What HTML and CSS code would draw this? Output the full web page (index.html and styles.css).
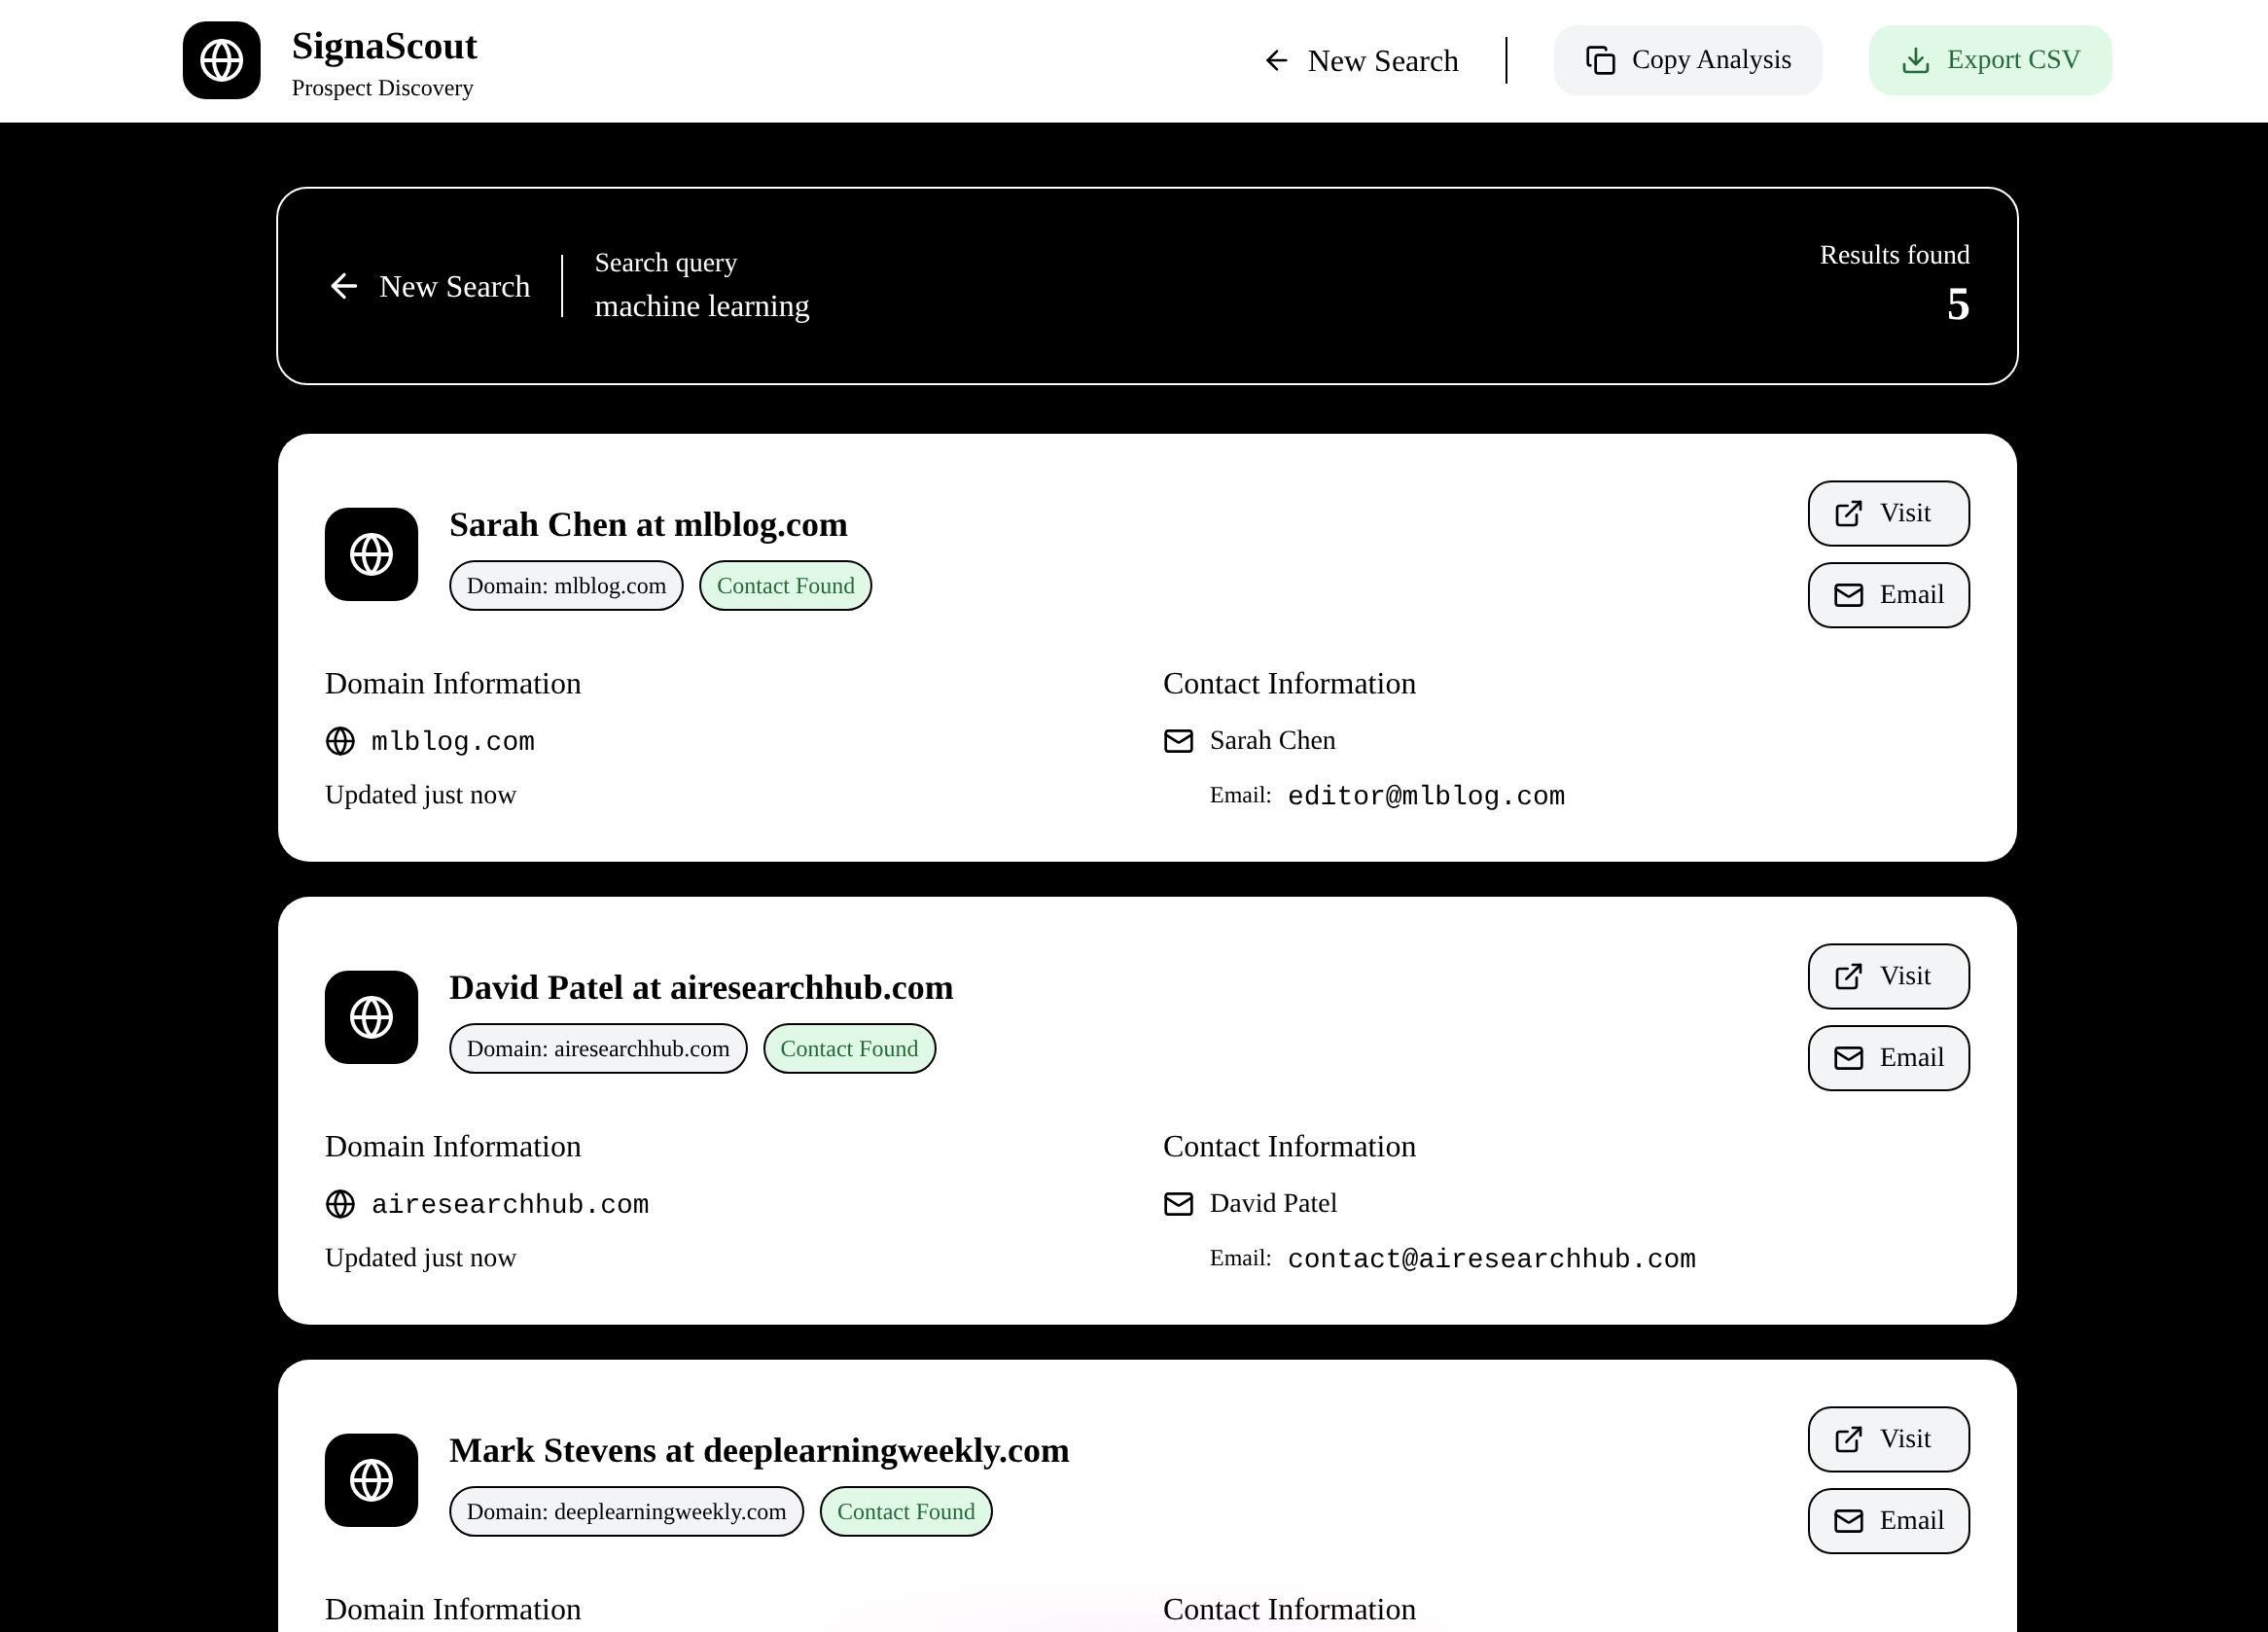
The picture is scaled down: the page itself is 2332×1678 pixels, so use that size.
FILE: index.html
```html
<!DOCTYPE html>
<html lang="en">
<head>
  <meta charset="UTF-8">
  <meta name="viewport" content="width=device-width, initial-scale=1.0">
  <title>SignaScout - Prospect Discovery</title>
  <link rel="stylesheet" href="styles.css">
</head>
<body>
  <!-- icon sprite -->
  <svg class="sprite" aria-hidden="true">
    <symbol id="i-globe" viewBox="0 0 24 24"><circle cx="12" cy="12" r="10"/><path d="M12 2a14.5 14.5 0 0 0 0 20 14.5 14.5 0 0 0 0-20"/><path d="M2 12h20"/></symbol>
    <symbol id="i-arrow" viewBox="0 0 24 24"><path d="m12 19-7-7 7-7"/><path d="M19 12H5"/></symbol>
    <symbol id="i-copy" viewBox="0 0 24 24"><rect width="14" height="14" x="8" y="8" rx="2" ry="2"/><path d="M4 16c-1.1 0-2-.9-2-2V4c0-1.1.9-2 2-2h10c1.1 0 2 .9 2 2"/></symbol>
    <symbol id="i-download" viewBox="0 0 24 24"><path d="M21 15v4a2 2 0 0 1-2 2H5a2 2 0 0 1-2-2v-4"/><polyline points="7 10 12 15 17 10"/><line x1="12" x2="12" y1="15" y2="3"/></symbol>
    <symbol id="i-external" viewBox="0 0 24 24"><path d="M15 3h6v6"/><path d="M10 14 21 3"/><path d="M18 13v6a2 2 0 0 1-2 2H5a2 2 0 0 1-2-2V8a2 2 0 0 1 2-2h6"/></symbol>
    <symbol id="i-mail" viewBox="0 0 24 24"><rect width="20" height="16" x="2" y="4" rx="2"/><path d="m22 7-8.97 5.7a1.94 1.94 0 0 1-2.06 0L2 7"/></symbol>
  </svg>

  <header class="topbar">
    <div class="brand">
      <div class="logo"><svg class="icon icon-logo"><use href="#i-globe"/></svg></div>
      <div class="brand-text">
        <h1 class="brand-name">SignaScout</h1>
        <p class="brand-sub">Prospect Discovery</p>
      </div>
    </div>
    <nav class="top-actions">
      <a class="top-link"><svg class="icon icon-md"><use href="#i-arrow"/></svg>New Search</a>
      <span class="top-divider"></span>
      <button class="top-btn"><svg class="icon icon-md"><use href="#i-copy"/></svg>Copy Analysis</button>
      <button class="top-btn top-btn-green"><svg class="icon icon-md"><use href="#i-download"/></svg>Export CSV</button>
    </nav>
  </header>

  <main class="content">
    <section class="summary">
      <div class="summary-left">
        <a class="summary-back"><svg class="icon icon-back"><use href="#i-arrow"/></svg>New Search</a>
        <span class="summary-divider"></span>
        <div class="query">
          <div class="query-label">Search query</div>
          <div class="query-value">machine learning</div>
        </div>
      </div>
      <div class="summary-right">
        <div class="results-label">Results found</div>
        <div class="results-count">5</div>
      </div>
    </section>

    <article class="card">
      <div class="card-top">
        <div class="card-head">
          <div class="card-logo"><svg class="icon icon-card"><use href="#i-globe"/></svg></div>
          <div>
            <h2 class="card-title">Sarah Chen at mlblog.com</h2>
            <div class="tags">
              <span class="tag">Domain: mlblog.com</span>
              <span class="tag tag-green">Contact Found</span>
            </div>
          </div>
        </div>
        <div class="card-actions">
          <button class="card-btn"><svg class="icon icon-md"><use href="#i-external"/></svg>Visit</button>
          <button class="card-btn"><svg class="icon icon-md"><use href="#i-mail"/></svg>Email</button>
        </div>
      </div>
      <div class="card-info">
        <div>
          <h3 class="info-title">Domain Information</h3>
          <div class="info-row"><svg class="icon icon-md"><use href="#i-globe"/></svg><span class="mono">mlblog.com</span></div>
          <div class="info-note">Updated just now</div>
        </div>
        <div>
          <h3 class="info-title">Contact Information</h3>
          <div class="info-row"><svg class="icon icon-md"><use href="#i-mail"/></svg><span>Sarah Chen</span></div>
          <div class="info-email"><span class="email-label">Email:</span><span class="mono">editor@mlblog.com</span></div>
        </div>
      </div>
    </article>

    <article class="card">
      <div class="card-top">
        <div class="card-head">
          <div class="card-logo"><svg class="icon icon-card"><use href="#i-globe"/></svg></div>
          <div>
            <h2 class="card-title">David Patel at airesearchhub.com</h2>
            <div class="tags">
              <span class="tag">Domain: airesearchhub.com</span>
              <span class="tag tag-green">Contact Found</span>
            </div>
          </div>
        </div>
        <div class="card-actions">
          <button class="card-btn"><svg class="icon icon-md"><use href="#i-external"/></svg>Visit</button>
          <button class="card-btn"><svg class="icon icon-md"><use href="#i-mail"/></svg>Email</button>
        </div>
      </div>
      <div class="card-info">
        <div>
          <h3 class="info-title">Domain Information</h3>
          <div class="info-row"><svg class="icon icon-md"><use href="#i-globe"/></svg><span class="mono">airesearchhub.com</span></div>
          <div class="info-note">Updated just now</div>
        </div>
        <div>
          <h3 class="info-title">Contact Information</h3>
          <div class="info-row"><svg class="icon icon-md"><use href="#i-mail"/></svg><span>David Patel</span></div>
          <div class="info-email"><span class="email-label">Email:</span><span class="mono">contact@airesearchhub.com</span></div>
        </div>
      </div>
    </article>

    <article class="card">
      <div class="card-top">
        <div class="card-head">
          <div class="card-logo"><svg class="icon icon-card"><use href="#i-globe"/></svg></div>
          <div>
            <h2 class="card-title">Mark Stevens at deeplearningweekly.com</h2>
            <div class="tags">
              <span class="tag">Domain: deeplearningweekly.com</span>
              <span class="tag tag-green">Contact Found</span>
            </div>
          </div>
        </div>
        <div class="card-actions">
          <button class="card-btn"><svg class="icon icon-md"><use href="#i-external"/></svg>Visit</button>
          <button class="card-btn"><svg class="icon icon-md"><use href="#i-mail"/></svg>Email</button>
        </div>
      </div>
      <div class="card-info">
        <div>
          <h3 class="info-title">Domain Information</h3>
        </div>
        <div>
          <h3 class="info-title">Contact Information</h3>
        </div>
      </div>
    </article>
  </main>

  <div class="bottom-glow"></div>
</body>
</html>
```

FILE: styles.css
```css
* {
  box-sizing: border-box;
}
html, body {
  height: 100%;
}
body {
  margin: 0;
  overflow: hidden;
  position: relative;
  background-color: #000;
  color: #000;
  font-family: "Liberation Serif", "Times New Roman", serif;
  text-rendering: geometricPrecision;
}
h1, h2, h3, p {
  margin: 0;
}
button {
  font-family: inherit;
  text-rendering: inherit;
  cursor: pointer;
}
.sprite {
  display: none;
}
.icon {
  fill: none;
  stroke: currentColor;
  stroke-width: 2;
  stroke-linecap: round;
  stroke-linejoin: round;
  flex-shrink: 0;
}
.icon-md { width: 32px; height: 32px; }
.icon-back { width: 40px; height: 40px; }
.icon-logo { width: 48px; height: 48px; }
.icon-card { width: 48px; height: 48px; }

/* top bar */
.topbar {
  height: 126px;
  padding: 0 160px 2px 188px;
  background-color: #fff;
  display: flex;
  align-items: center;
  justify-content: space-between;
}
.brand {
  display: flex;
  align-items: center;
  gap: 32px;
}
.logo {
  width: 80px;
  height: 80px;
  border-radius: 24px;
  background-color: #000;
  color: #fff;
  display: flex;
  align-items: center;
  justify-content: center;
}
.brand-text {
  padding-top: 5px;
}
.brand-name {
  font-size: 40px;
  line-height: 48px;
  font-weight: 700;
}
.brand-sub {
  margin-top: 4px;
  font-size: 24px;
  line-height: 32px;
}
.top-actions {
  display: flex;
  align-items: center;
}
.top-link {
  display: flex;
  align-items: center;
  gap: 16px;
  font-size: 32px;
}
.top-divider {
  width: 2px;
  height: 48px;
  margin: 0 48px;
  background-color: #000;
}
.top-btn {
  height: 72px;
  padding: 0 32px;
  margin-right: 48px;
  border: none;
  border-radius: 24px;
  background-color: #f3f4f6;
  color: #000;
  font-size: 28px;
  display: flex;
  align-items: center;
  gap: 16px;
}
.top-btn-green {
  margin-right: 0;
  background-color: #e0f9e7;
  color: #256b3a;
}

/* main column */
.content {
  width: 1792px;
  margin: 66px 0 0 284px;
}
.summary {
  height: 204px;
  padding: 0 48px;
  border: 2px solid #fff;
  border-radius: 32px;
  color: #fff;
  display: flex;
  align-items: center;
  justify-content: space-between;
  margin-bottom: 50px;
}
.summary-left {
  display: flex;
  align-items: center;
}
.summary-back {
  display: flex;
  align-items: center;
  gap: 16px;
  font-size: 32px;
}
.summary-divider {
  width: 2px;
  height: 64px;
  margin: 0 32px;
  background-color: #fff;
}
.query {
  padding-top: 1px;
}
.query-label {
  font-size: 28px;
  line-height: 40px;
}
.query-value {
  font-size: 32px;
  line-height: 47px;
}
.summary-right {
  text-align: right;
  padding-bottom: 4px;
}
.results-label {
  font-size: 28px;
  line-height: 40px;
  margin-bottom: 2px;
}
.results-count {
  font-size: 48px;
  line-height: 56px;
  font-weight: 700;
}

/* result cards */
.card {
  height: 440px;
  margin: 0 2px 36px;
  padding: 48px;
  border-radius: 32px;
  background-color: #fff;
}
.card-top {
  display: flex;
  justify-content: space-between;
  align-items: center;
}
.card-head {
  display: flex;
  align-items: center;
  gap: 32px;
}
.card-logo {
  width: 96px;
  height: 96px;
  border-radius: 24px;
  background-color: #000;
  color: #fff;
  display: flex;
  align-items: center;
  justify-content: center;
}
.card-title {
  font-size: 36px;
  line-height: 48px;
  font-weight: 700;
  margin: 3px 0 13px;
}
.tags {
  display: flex;
  gap: 16px;
}
.tag {
  height: 52px;
  padding: 2px 16px 0;
  border: 2px solid #000;
  border-radius: 26px;
  background-color: #f3f4f6;
  font-size: 24px;
  display: flex;
  align-items: center;
}
.tag-green {
  background-color: #e0f9e7;
  color: #256b3a;
}
.card-actions {
  width: 167px;
  display: flex;
  flex-direction: column;
  gap: 16px;
}
.card-btn {
  height: 68px;
  padding: 0 24px;
  border: 2px solid #000;
  border-radius: 24px;
  background-color: #f3f4f6;
  color: #000;
  font-size: 28px;
  display: flex;
  align-items: center;
  gap: 16px;
}
.card-info {
  display: grid;
  grid-template-columns: 1fr 1fr;
  gap: 32px;
  margin-top: 32px;
}
.info-title {
  font-size: 32px;
  line-height: 48px;
  font-weight: 400;
  margin-bottom: 16px;
}
.info-row {
  display: flex;
  align-items: center;
  gap: 16px;
  font-size: 28px;
  line-height: 40px;
  margin-bottom: 16px;
}
.info-note {
  font-size: 28px;
  line-height: 40px;
}
.info-email {
  display: flex;
  align-items: center;
  gap: 16px;
  padding-left: 48px;
  line-height: 40px;
}
.email-label {
  font-size: 24px;
}
.mono {
  font-family: "Liberation Mono", "Courier New", monospace;
  font-size: 28px;
  line-height: 34px;
  padding-top: 6px;
}

/* faint glow at the bottom edge, multiplied so the text stays black */
.bottom-glow {
  position: absolute;
  left: 766px;
  bottom: -61px;
  width: 800px;
  height: 122px;
  background: radial-gradient(closest-side, #fdf6fb, rgba(253, 246, 251, 0));
  mix-blend-mode: multiply;
  pointer-events: none;
}
```
